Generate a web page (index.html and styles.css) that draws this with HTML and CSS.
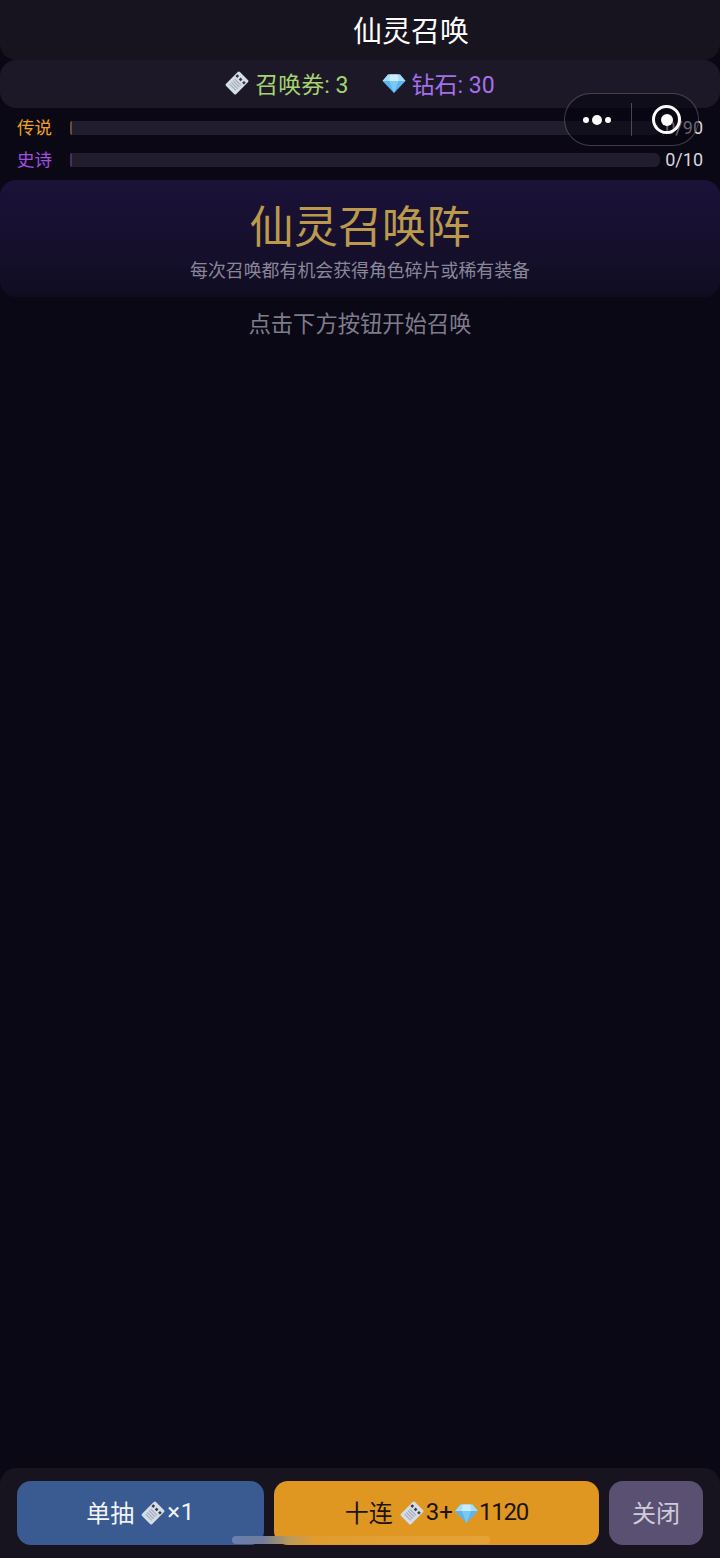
FILE: index.html
```html
<!DOCTYPE html>
<html lang="zh">
<head>
<meta charset="utf-8">
<title>仙灵召唤</title>
<link rel="stylesheet" href="styles.css">
</head>
<body>
<svg class="defs" width="0" height="0" aria-hidden="true">
  <symbol id="ticket" viewBox="0 0 24 24">
    <g transform="rotate(45 12 12)">
      <rect x="4.8" y="2.2" width="14.4" height="19.6" rx="1.6" fill="#d5dde6"/>
      <rect x="7.5" y="10.2" width="9" height="1.2" fill="#a3aebb"/>
      <rect x="7.5" y="12.6" width="9" height="1.2" fill="#a3aebb"/>
      <rect x="7.5" y="15" width="9" height="1.2" fill="#a3aebb"/>
      <rect x="7.5" y="17.4" width="9" height="1.2" fill="#a3aebb"/>
      <rect x="6" y="5.6" width="2.6" height="2.6" fill="#33384a"/>
      <rect x="10.7" y="5.6" width="2.6" height="2.6" fill="#33384a"/>
      <rect x="15.4" y="5.6" width="2.6" height="2.6" fill="#33384a"/>
    </g>
  </symbol>
  <symbol id="gem" viewBox="0 0 24 24">
    <path d="M6 3.5h12l5.5 6.5L12 22 .5 10z" fill="#5db4ee"/>
    <path d="M6 3.5h12l5.5 6.5H.5z" fill="#a5dcf8"/>
    <path d="M7.5 10h9L12 22z" fill="#7cc8f4"/>
    <path d="M8 3.5h8l.5 6.5h-9z" fill="#c9ecfb"/>
  </symbol>
</svg>
<div class="page">
  <header class="title-bar"><h1 class="title">仙灵召唤</h1></header>
  <section class="resources">
    <span class="res res-ticket"><svg class="icon"><use href="#ticket"/></svg>召唤券: 3</span>
    <span class="res res-gem"><svg class="icon"><use href="#gem"/></svg>钻石: 30</span>
  </section>
  <section class="pity">
    <div class="pity-row">
      <span class="pity-label legend">传说</span>
      <div class="track"><div class="fill fill-legend"></div></div>
      <span class="pity-count">0/90</span>
    </div>
    <div class="pity-row">
      <span class="pity-label epic">史诗</span>
      <div class="track"><div class="fill fill-epic"></div></div>
      <span class="pity-count">0/10</span>
    </div>
  </section>
  <section class="banner">
    <h2 class="banner-title">仙灵召唤阵</h2>
    <p class="banner-sub">每次召唤都有机会获得角色碎片或稀有装备</p>
  </section>
  <main class="stage"><p class="hint">点击下方按钮开始召唤</p></main>
  <footer class="actions">
    <button class="btn btn-single">单抽 <svg class="icon-sm"><use href="#ticket"/></svg><span class="times">×1</span></button>
    <button class="btn btn-ten">十连 <svg class="icon-sm"><use href="#ticket"/></svg>3+<svg class="icon-sm icon-gem"><use href="#gem"/></svg><span class="cost">1120</span></button>
    <button class="btn btn-close">关闭</button>
    <div class="home-indicator"></div>
  </footer>
</div>
<div class="capsule">
  <div class="capsule-dots"><i class="dot"></i><i class="dot dot-big"></i><i class="dot"></i></div>
  <div class="capsule-line"></div>
  <div class="capsule-target"><i class="target-core"></i></div>
</div>
</body>
</html>
```
FILE: styles.css
```css
* { box-sizing: border-box; }
html, body { margin: 0; padding: 0; }
body {
  background: #0a0814;
  font-family: "Roboto", "Noto Sans CJK SC", sans-serif;
  color: #fff;
}
.defs { position: absolute; }
.page {
  position: relative;
  min-height: 1558px;
  display: flex;
  flex-direction: column;
}
.title-bar {
  height: 60px;
  background: #17131f;
  border-radius: 0 0 16px 16px;
  padding: 0 0 3px 102px;
  display: flex;
  align-items: center;
  justify-content: center;
}
.title { margin: 0; font-size: 29px; font-weight: 400; color: #fff; }
.resources {
  height: 48px;
  background: #1c1828;
  border-radius: 16px;
  display: flex;
  align-items: center;
  justify-content: center;
  gap: 34px;
  font-size: 23px;
  padding-bottom: 2px;
}
.res { display: flex; align-items: center; gap: 6px; }
.res-ticket { color: #a5d46f; }
.res-gem { color: #a571ea; }
.icon { width: 24px; height: 24px; flex: none; }
.res-gem .icon { margin-left: -1px; }
.pity { padding: 4px 17px 0; }
.pity-row { height: 32px; display: flex; align-items: center; }
.pity-label { width: 53px; font-size: 17.5px; padding-bottom: 3px; }
.legend { color: #eea326; }
.epic { color: #a24fe0; }
.track {
  flex: 1;
  height: 14px;
  background: #211d2e;
  border-radius: 2px 6px 6px 2px;
  overflow: hidden;
}
.fill { width: 2px; height: 100%; }
.fill-legend { background: #6a4a3a; }
.fill-epic { background: #45305f; }
.pity-count {
  width: 43px;
  text-align: right;
  font-size: 18px;
  color: #d9d7de;
  padding-bottom: 2px;
}
.banner {
  margin-top: 4px;
  height: 117px;
  border-radius: 16px;
  background: linear-gradient(180deg, #1b1238 0%, #140f2a 70%, #100c20 100%);
  text-align: center;
  padding-top: 19px;
}
.banner-title {
  margin: 0;
  font-size: 44.2px;
  line-height: 58px;
  font-weight: 400;
  color: #bb9a4d;
}
.banner-sub {
  margin: 2px 0 0;
  font-size: 17.9px;
  line-height: 24px;
  color: #8a8799;
}
.stage { flex: 1; text-align: center; }
.hint {
  margin: 13px 0 0;
  font-size: 22.3px;
  line-height: 28px;
  color: #7f7c8c;
}
.actions {
  position: relative;
  height: 90px;
  background: #17131f;
  border-radius: 16px 16px 0 0;
  padding: 13px 17px 0;
  display: flex;
  align-items: flex-start;
  gap: 10px;
}
.btn {
  height: 64px;
  border: 0;
  border-radius: 14px;
  font-family: inherit;
  font-size: 24px;
  display: flex;
  align-items: center;
  justify-content: center;
  padding: 0 0 3px;
}
.icon-sm { width: 24px; height: 24px; flex: none; margin: 3px 2px 0 7px; }
.icon-gem { width: 25px; margin: 3px 0 0 1px; }
.cost { letter-spacing: -1.2px; }
.times { letter-spacing: 0.5px; }
.btn-single { width: 247px; background: #3a5a92; color: #f2f3f7; }
.btn-ten { width: 325px; background: #e09722; color: #1f1408; }
.btn-close { width: 94px; background: #5a5172; color: #cfcbdb; }
.home-indicator {
  position: absolute;
  left: 232px;
  top: 68px;
  width: 258px;
  height: 8px;
  border-radius: 4px;
  background: linear-gradient(90deg, #6a80ad 0%, #707d9c 12%, #b89a5c 22%, #e09d2e 32%, #e5a237 100%);
}
.capsule {
  position: absolute;
  left: 564px;
  top: 93px;
  width: 135px;
  height: 53px;
  border-radius: 27px;
  border: 1.5px solid rgba(255, 255, 255, 0.22);
  background: rgba(8, 6, 16, 0.55);
  display: flex;
  align-items: center;
}
.capsule-dots {
  width: 66px;
  display: flex;
  align-items: center;
  justify-content: center;
  gap: 3px;
  padding-right: 2px;
}
.dot { width: 6px; height: 6px; border-radius: 50%; background: #fff; }
.dot-big { width: 10px; height: 10px; }
.capsule-line { width: 1px; height: 33px; background: rgba(255, 255, 255, 0.25); }
.capsule-target {
  margin-left: 20px;
  width: 29px;
  height: 29px;
  border: 3.5px solid #fff;
  border-radius: 50%;
  display: flex;
  align-items: center;
  justify-content: center;
}
.target-core { width: 12px; height: 12px; border-radius: 50%; background: #fff; }
```
